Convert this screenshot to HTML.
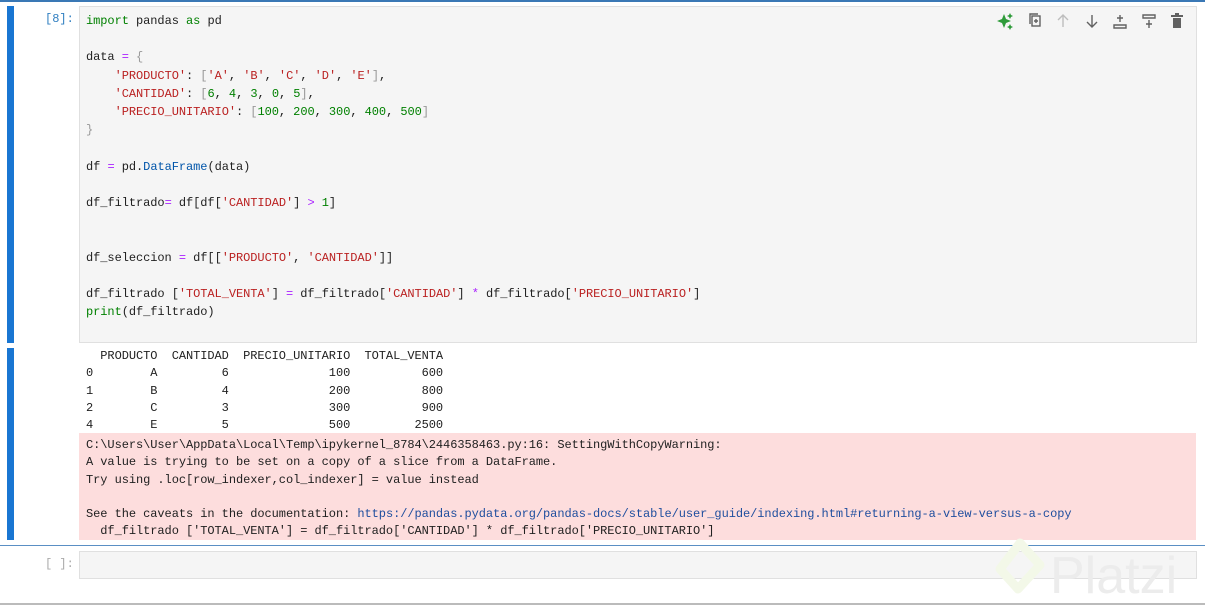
<!DOCTYPE html>
<html><head><style>
body{margin:0;width:1205px;height:605px;background:#fff;position:relative;overflow:hidden;font-family:"Liberation Mono",monospace;font-size:12px;}
.top{position:absolute;left:0;top:0;width:1205px;height:2px;background:#3a78b5;}
.bar{position:absolute;left:7px;width:7px;background:#1976d2;}
.prompt{position:absolute;color:#307fc1;font-size:12px;}
.code{position:absolute;left:79px;top:6px;width:1116px;height:335px;background:#f5f5f5;border:1px solid #e0e0e0;}
pre{margin:0;font-family:"Liberation Mono",monospace;font-size:12px;letter-spacing:-0.06px;}
.code pre{position:absolute;left:6px;top:5px;line-height:18.2px;color:#212121;}
.k{color:#008000}.s{color:#ba2121}.n{color:#008000}.o{color:#aa22ff}.f{color:#0055aa}.b{color:#999}.bi{color:#008000}
.out{position:absolute;left:86px;top:348px;line-height:17.3px;color:#212121;}
.err{position:absolute;left:79px;top:433px;width:1117px;height:107px;background:#fddddd;}
.err pre{position:absolute;left:7px;top:4px;line-height:17.3px;color:#212121;}
.err a{color:#1f4e9e;text-decoration:none}
.sep{position:absolute;left:0;top:545px;width:1205px;height:1px;background:#5a8fc4;}
.empty{position:absolute;left:79px;top:551px;width:1116px;height:26px;background:#f5f5f5;border:1px solid #e0e0e0;}
.bot{position:absolute;left:0;top:603px;width:1205px;height:2px;background:#bbb;}
.icons{position:absolute;top:12px;left:996px;}
</style></head><body>
<div class="top"></div>
<div class="bar" style="top:6px;height:337px"></div>
<div class="bar" style="top:348px;height:192px"></div>
<div class="prompt" style="left:45px;top:12px">[8]:</div>
<div class="code"><pre><span class="k">import</span> pandas <span class="k">as</span> pd

data <span class="o">=</span> <span class="b">{</span>
    <span class="s">'PRODUCTO'</span>: <span class="b">[</span><span class="s">'A'</span>, <span class="s">'B'</span>, <span class="s">'C'</span>, <span class="s">'D'</span>, <span class="s">'E'</span><span class="b">]</span>,
    <span class="s">'CANTIDAD'</span>: <span class="b">[</span><span class="n">6</span>, <span class="n">4</span>, <span class="n">3</span>, <span class="n">0</span>, <span class="n">5</span><span class="b">]</span>,
    <span class="s">'PRECIO_UNITARIO'</span>: <span class="b">[</span><span class="n">100</span>, <span class="n">200</span>, <span class="n">300</span>, <span class="n">400</span>, <span class="n">500</span><span class="b">]</span>
<span class="b">}</span>

df <span class="o">=</span> pd.<span class="f">DataFrame</span>(data)

df_filtrado<span class="o">=</span> df[df[<span class="s">'CANTIDAD'</span>] <span class="o">&gt;</span> <span class="n">1</span>]


df_seleccion <span class="o">=</span> df[[<span class="s">'PRODUCTO'</span>, <span class="s">'CANTIDAD'</span>]]

df_filtrado [<span class="s">'TOTAL_VENTA'</span>] <span class="o">=</span> df_filtrado[<span class="s">'CANTIDAD'</span>] <span class="o">*</span> df_filtrado[<span class="s">'PRECIO_UNITARIO'</span>]
<span class="bi">print</span>(df_filtrado)</pre></div>
<svg class="icons" width="190" height="18" viewBox="0 0 190 18">
<g fill="#2e9b3a"><path d="M8 2 L10 7 L15 9 L10 11 L8 16 L6 11 L1 9 L6 7Z"/><path d="M14 1 l1 2 2 1 -2 1 -1 2 -1 -2 -2 -1 2 -1z"/><path d="M14 12 l1 2 2 1 -2 1 -1 2 -1 -2 -2 -1 2 -1z"/></g>
<g fill="none" stroke="#616161" stroke-width="1.4">
<rect x="36" y="4" width="8" height="10"/><path d="M34 12V2h8"/><path d="M40 7v4M38 9h4"/>
<path d="M67 15V3M62 8l5-5 5 5" stroke="#bdbdbd"/>
<path d="M96 3v12M91 10l5 5 5-5"/>
<path d="M118 13h12v3h-12z"/><path d="M124 3v7M121 6h6"/>
<path d="M147 3h12v3h-12z"/><path d="M153 8v8M150 12h6"/>
</g>
<g fill="#616161"><rect x="177" y="6" width="8" height="10"/><rect x="175" y="3" width="12" height="2"/><rect x="179" y="1" width="4" height="2"/></g>
</svg>
<pre class="out">  PRODUCTO  CANTIDAD  PRECIO_UNITARIO  TOTAL_VENTA
0        A         6              100          600
1        B         4              200          800
2        C         3              300          900
4        E         5              500         2500</pre>
<div class="err"><pre>C:\Users\User\AppData\Local\Temp\ipykernel_8784\2446358463.py:16: SettingWithCopyWarning:
A value is trying to be set on a copy of a slice from a DataFrame.
Try using .loc[row_indexer,col_indexer] = value instead

See the caveats in the documentation: <a>https://pandas.pydata.org/pandas-docs/stable/user_guide/indexing.html#returning-a-view-versus-a-copy</a>
  df_filtrado ['TOTAL_VENTA'] = df_filtrado['CANTIDAD'] * df_filtrado['PRECIO_UNITARIO']</pre></div>
<div class="sep"></div>
<div class="prompt" style="left:45px;top:557px;color:#aaa">[ ]:</div>
<div class="empty"></div>
<svg style="position:absolute;left:990px;top:531px" width="215" height="74">
<path d="M30 12 L50 34 L28 58 L10 38 Z" fill="none" stroke="#f3f8e8" stroke-width="9" stroke-linejoin="round"/>
<text x="60" y="62" font-family="Liberation Sans,sans-serif" font-size="52" fill="#ececec">Platzi</text>
</svg>
<div class="bot"></div>
</body></html>
